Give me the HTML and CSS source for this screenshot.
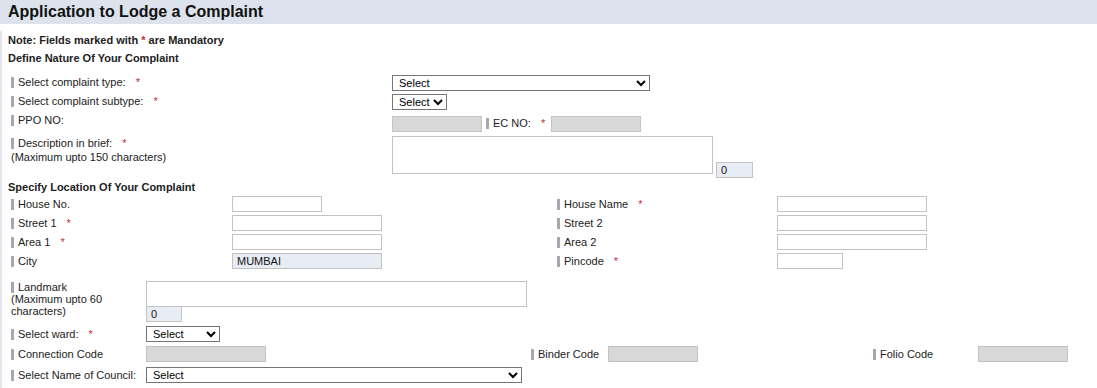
FILE: index.html
```html
<!DOCTYPE html>
<html lang="en">
<head>
    <meta charset="UTF-8">
    <meta name="viewport" content="width=device-width, initial-scale=1.0">
    <title>Application to Lodge a Complaint</title>
    <link rel="stylesheet" href="styles.css">
</head>
<body>
    <div class="page-header">
        <h1>Application to Lodge a Complaint</h1>
    </div>

    <div class="form-body">
        <p class="note">Note: Fields marked with <span class="star">*</span> are Mandatory</p>
        <h2 class="section-title">Define Nature Of Your Complaint</h2>

        <!-- Nature of complaint -->
        <div class="nature">
            <div class="row nature-row">
                <label class="field-label"><span class="bar"></span>Select complaint type: <span class="req">*</span></label>
                <div class="field">
                    <select class="sel sel-type"><option>Select</option></select>
                </div>
            </div>
            <div class="row nature-row">
                <label class="field-label"><span class="bar"></span>Select complaint subtype: <span class="req">*</span></label>
                <div class="field">
                    <select class="sel"><option>Select</option></select>
                </div>
            </div>
            <div class="row nature-row">
                <label class="field-label"><span class="bar"></span>PPO NO:</label>
                <div class="field inline-field pad-top">
                    <input type="text" class="txt ro w90" readonly>
                    <label class="inline-label"><span class="bar"></span>EC NO: <span class="req">*</span></label>
                    <input type="text" class="txt ro w90" readonly>
                </div>
            </div>
            <div class="row nature-row desc-row">
                <label class="field-label"><span class="bar"></span>Description in brief: <span class="req">*</span><br>(Maximum upto 150 characters)</label>
                <div class="field inline-field">
                    <textarea class="area desc-area"></textarea>
                    <input type="text" class="txt counter desc-counter" value="0" readonly>
                </div>
            </div>
        </div>

        <h2 class="section-title location-title">Specify Location Of Your Complaint</h2>

        <!-- Location -->
        <div class="location">
            <div class="row loc-row">
                <label class="field-label"><span class="bar"></span>House No.</label>
                <div class="field"><input type="text" class="txt w90"></div>
                <label class="field-label"><span class="bar"></span>House Name <span class="req">*</span></label>
                <div class="field"><input type="text" class="txt w150"></div>
            </div>
            <div class="row loc-row">
                <label class="field-label"><span class="bar"></span>Street 1 <span class="req">*</span></label>
                <div class="field"><input type="text" class="txt w150"></div>
                <label class="field-label"><span class="bar"></span>Street 2</label>
                <div class="field"><input type="text" class="txt w150"></div>
            </div>
            <div class="row loc-row">
                <label class="field-label"><span class="bar"></span>Area 1 <span class="req">*</span></label>
                <div class="field"><input type="text" class="txt w150"></div>
                <label class="field-label"><span class="bar"></span>Area 2</label>
                <div class="field"><input type="text" class="txt w150"></div>
            </div>
            <div class="row loc-row">
                <label class="field-label"><span class="bar"></span>City</label>
                <div class="field"><input type="text" class="txt counter w150" value="MUMBAI" readonly></div>
                <label class="field-label"><span class="bar"></span>Pincode <span class="req">*</span></label>
                <div class="field"><input type="text" class="txt w66"></div>
            </div>
        </div>

        <!-- Other details -->
        <div class="details">
            <div class="row det-row landmark-row">
                <label class="field-label small-lines"><span class="bar"></span>Landmark<br>(Maximum upto 60 characters)</label>
                <div class="field">
                    <textarea class="area landmark-area"></textarea>
                    <input type="text" class="txt counter landmark-counter" value="0" readonly>
                </div>
            </div>
            <div class="row det-row">
                <label class="field-label"><span class="bar"></span>Select ward: <span class="req">*</span></label>
                <div class="field"><select class="sel sel-ward"><option>Select</option></select></div>
            </div>
            <div class="row det-row">
                <label class="field-label"><span class="bar"></span>Connection Code</label>
                <div class="field"><input type="text" class="txt ro w120" readonly></div>
                <label class="field-label"><span class="bar"></span>Binder Code</label>
                <div class="field"><input type="text" class="txt ro w90" readonly></div>
                <label class="field-label"><span class="bar"></span>Folio Code</label>
                <div class="field"><input type="text" class="txt ro w90" readonly></div>
            </div>
            <div class="row det-row council-row">
                <label class="field-label"><span class="bar"></span>Select Name of Council:</label>
                <div class="field"><select class="sel sel-council"><option>Select</option></select></div>
            </div>
        </div>
    </div>
</body>
</html>
```

FILE: styles.css
```css
* {
    margin: 0;
    padding: 0;
    box-sizing: border-box;
}
body {
    background-color: #fff;
    font-family: "Liberation Sans", Arial, sans-serif;
    font-size: 11px;
    color: #222;
}
.page-header {
    height: 24px;
    background-color: #dce3ec;
    padding-left: 8px;
}
.page-header h1 {
    font-size: 16px;
    line-height: 24px;
    font-weight: bold;
    color: #111;
}
.form-body {
    border-left: 2px solid #e4e6ea;
    padding-left: 6px;
    min-height: 364px;
}
.note {
    font-weight: bold;
    line-height: 18px;
    margin-top: 7px;
}
.star {
    color: #c8283c;
}
.section-title {
    font-size: 11px;
    font-weight: bold;
    line-height: 18px;
}
.location-title {
    line-height: 14px;
    margin-top: 2px;
}
.req {
    color: #c8283c;
    margin-left: 7px;
}
.bar {
    display: inline-block;
    width: 3px;
    height: 11px;
    background-color: #a4a8b0;
    margin-right: 4px;
    vertical-align: -2px;
}

/* rows */
.row {
    display: grid;
    align-items: start;
}
.field-label {
    padding-left: 3px;
    line-height: 14px;
}
.field {
    display: flex;
    align-items: flex-start;
}

.nature {
    display: flex;
    flex-direction: column;
    gap: 3px;
    margin-top: 8px;
}
.nature-row {
    grid-template-columns: 384px 1fr;
}
.pad-top {
    padding-top: 3px;
}
.desc-row {
    margin-top: 1px;
}
.inline-label {
    line-height: 14px;
    margin-left: 4px;
    margin-right: 6px;
}

.location {
    display: flex;
    flex-direction: column;
    gap: 3px;
    margin-top: 2px;
}
.loc-row {
    grid-template-columns: 224px 322px 223px 1fr;
}
.loc-row .field-label,
.det-row .field-label {
    line-height: 16px;
}

.details {
    display: flex;
    flex-direction: column;
    gap: 4px;
    margin-top: 12px;
}
.det-row {
    grid-template-columns: 138px 382px 80px 262px 108px 1fr;
}
.landmark-row .field {
    flex-direction: column;
}
.det-row .small-lines {
    line-height: 12px;
}
.council-row {
    margin-top: 1px;
}

/* controls */
.txt {
    height: 16px;
    border: 1px solid #c3c3c3;
    background-color: #fff;
    font-family: "Liberation Sans", Arial, sans-serif;
    font-size: 11px;
    color: #111;
    padding: 0 4px;
    outline: none;
}
.ro {
    background-color: #d8d8d8;
}
.counter {
    background-color: #e8edf5;
}
.w66 { width: 66px; }
.w90 { width: 90px; }
.w120 { width: 120px; }
.w150 { width: 150px; }

.sel {
    height: 16px;
    border: 1px solid #767676;
    border-radius: 0;
    background-color: #fff;
    font-family: "Liberation Sans", Arial, sans-serif;
    font-size: 11px;
    color: #000;
    padding: 0 0 0 2px;
}
.sel-type { width: 258px; }
.sel-ward { width: 74px; }
.sel-council { width: 376px; }

.area {
    display: block;
    border: 1px solid #c3c3c3;
    resize: none;
    font-family: "Liberation Sans", Arial, sans-serif;
    font-size: 11px;
    outline: none;
}
.desc-area {
    width: 321px;
    height: 38px;
}
.desc-counter {
    width: 37px;
    margin-left: 3px;
    margin-top: 26px;
}
.landmark-area {
    width: 381px;
    height: 26px;
}
.landmark-counter {
    width: 36px;
    margin-top: -1px;
}
```
